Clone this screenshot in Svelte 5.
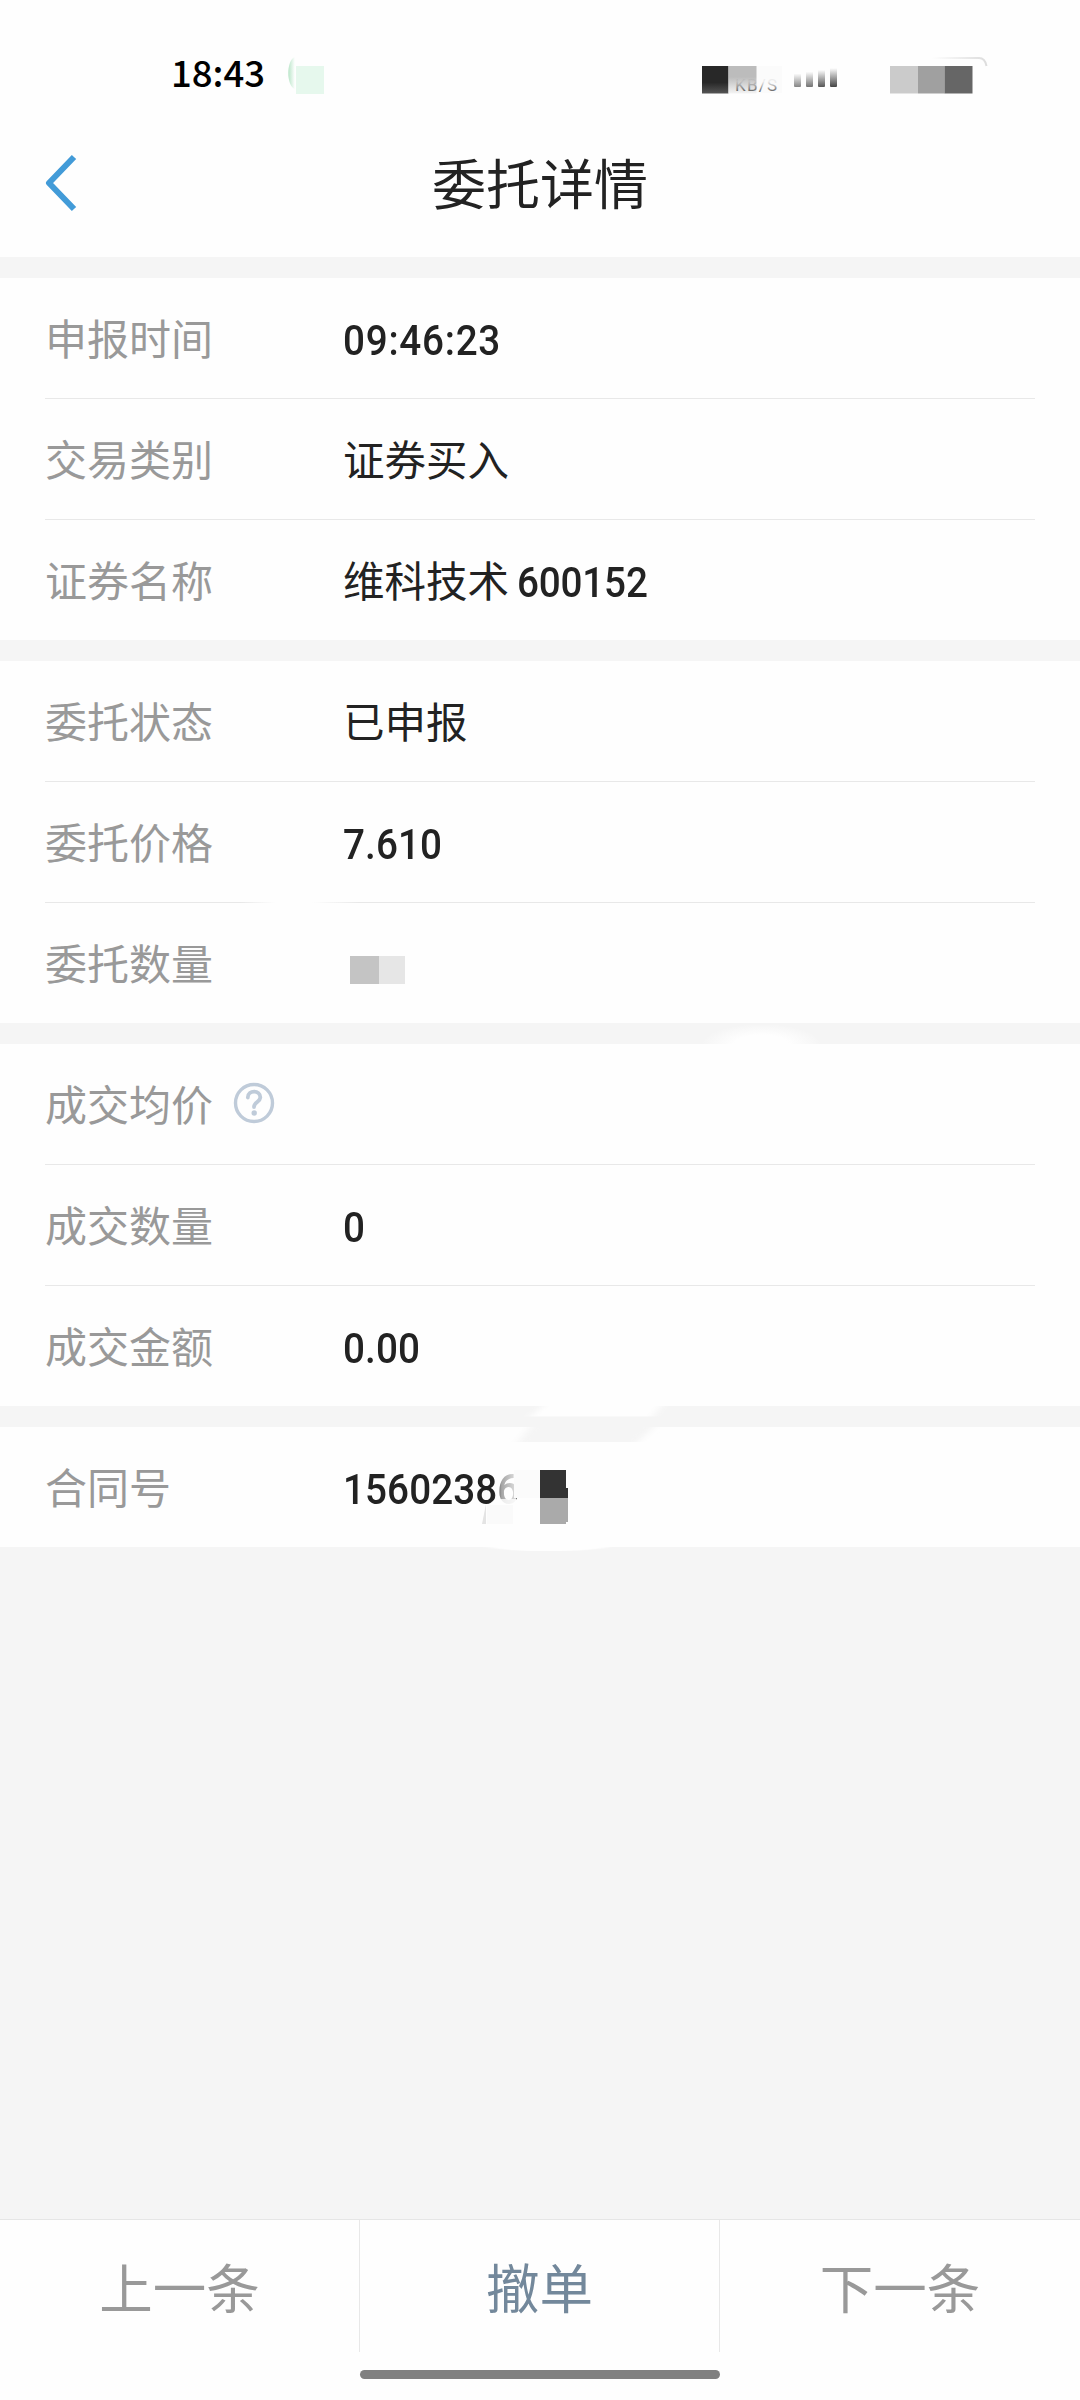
<script lang="ts">
  type Row = {
    label: string;
    text?: string;
    number?: string;
    time?: boolean;
    help?: boolean;
    masked?: 'amount' | 'contract';
  };

  const sections: Row[][] = [
    [
      { label: '申报时间', number: '09:46:23', time: true },
      { label: '交易类别', text: '证券买入' },
      { label: '证券名称', text: '维科技术', number: '600152' },
    ],
    [
      { label: '委托状态', text: '已申报' },
      { label: '委托价格', number: '7.610' },
      { label: '委托数量', masked: 'amount' },
    ],
    [
      { label: '成交均价', help: true },
      { label: '成交数量', number: '0' },
      { label: '成交金额', number: '0.00' },
    ],
    [{ label: '合同号', number: '15602386', masked: 'contract' }],
  ];
</script>

<div class="screen">
  <header>
    <div class="status-bar">
      <span class="clock">18:43</span>
      <svg class="status-left" width="44" height="44" viewBox="284 52 44 44">
        <defs>
          <linearGradient id="leaf" x1="0" x2="1">
            <stop offset="0" stop-color="#b9e5c8" />
            <stop offset="1" stop-color="#fff" />
          </linearGradient>
        </defs>
        <path d="M295 57C286 60 286 86 295 89Z" fill="url(#leaf)" />
        <rect x="296" y="66" width="28" height="28" fill="#e6f8ed" />
      </svg>
      <svg class="status-right" width="300" height="50" viewBox="694 52 300 50">
        <defs>
          <linearGradient id="bar" x1="0" y1="0" x2="0" y2="1">
            <stop offset="0.1" stop-color="#444" stop-opacity="0" />
            <stop offset="1" stop-color="#444" />
          </linearGradient>
          <linearGradient id="speed" x1="0" y1="0" x2="0" y2="1">
            <stop offset="0.35" stop-color="#666" stop-opacity="0.1" />
            <stop offset="0.9" stop-color="#555" />
          </linearGradient>
          <linearGradient id="dark" x1="0" y1="0" x2="0" y2="1">
            <stop offset="0.6" stop-color="#282828" />
            <stop offset="1" stop-color="#555" />
          </linearGradient>
          <linearGradient id="edge" x1="0" x2="1">
            <stop offset="0" stop-color="#ddd" stop-opacity="0" />
            <stop offset="1" stop-color="#ddd" />
          </linearGradient>
          <linearGradient id="fade" x1="0" y1="0" x2="0" y2="1">
            <stop offset="0.4" stop-color="#bcbcbc" />
            <stop offset="1" stop-color="#f4f4f4" />
          </linearGradient>
        </defs>
        <rect x="756" y="66" width="26" height="27" fill="#fbfbfb" />
        <rect x="702" y="66" width="26.5" height="27.5" fill="url(#dark)" />
        <rect x="728.5" y="66" width="28" height="27.5" fill="url(#fade)" />
        <text x="735" y="90.5" class="speed" fill="url(#speed)" textLength="42">KB/S</text>
        <rect x="794" y="72" width="7" height="15" rx="1" fill="url(#bar)" opacity="0.65" />
        <rect x="806" y="70" width="7" height="17" rx="1" fill="url(#bar)" opacity="0.75" />
        <rect x="818" y="68" width="7" height="19" rx="1" fill="url(#bar)" opacity="0.9" />
        <rect x="830" y="66" width="7" height="21" rx="1" fill="url(#bar)" />
        <path d="M932 58H979Q985 58 986.5 66" fill="none" stroke="url(#edge)" stroke-width="2" />
        <rect x="890" y="66" width="28" height="27.5" fill="#cbcbcb" />
        <rect x="918" y="66" width="26.5" height="27.5" fill="#a0a0a0" />
        <rect x="944.5" y="66" width="28" height="27.5" fill="#666" />
      </svg>
    </div>
    <div class="nav-bar">
      <button class="back" aria-label="返回">
        <svg width="36" height="60" viewBox="0 0 36 60">
          <path d="M30 4L5 30L30 56" fill="none" stroke="#429bd8" stroke-width="6" stroke-linejoin="round" />
        </svg>
      </button>
      <h1>委托详情</h1>
    </div>
  </header>

  <main>
    {#each sections as rows, s}
      <section>
        {#each rows as row}
          <div class="row">
            <span class="label">
              {row.label}
              {#if row.help}
                <svg class="help" width="42" height="42" viewBox="0 0 42 42" fill="none" stroke="#bfcbd9">
                  <circle cx="21" cy="21" r="18.5" stroke-width="3.4" />
                  <path d="M14.8 15.5C15 7.500 27.500 7.700 27.300 15.500C27 20 21 20 21 25" stroke-width="3.8" stroke-linecap="round" />
                  <circle cx="21.2" cy="31" r="2.700" fill="#bfcbd9" stroke="none" />
                </svg>
              {/if}
            </span>
            <span class="value">
              {#if row.text}<span>{row.text}</span>{/if}
              {#if row.number}
                <span class="number" class:time={row.time} class:after-text={row.text}>{row.number}</span>
              {/if}
              {#if row.masked === 'amount'}
                <i class="mask"></i>
              {/if}
            </span>
            {#if row.masked === 'contract'}
              <svg class="contract-mask" width="400" height="190" viewBox="0 0 400 190">
                <defs>
                  <filter id="soft" x="-10%" y="-50%" width="120%" height="200%">
                    <feGaussianBlur stdDeviation="5 0.5" />
                  </filter>
                  <linearGradient id="wipe" x1="0" x2="1">
                    <stop offset="0" stop-color="#fefefe" stop-opacity="0" />
                    <stop offset="0.35" stop-color="#fefefe" stop-opacity="0.6" />
                    <stop offset="1" stop-color="#fefefe" stop-opacity="0.85" />
                  </linearGradient>
                </defs>
                <path d="M213 26H331L323 36.5H200Z" fill="#fefefe" filter="url(#soft)" />
                <path d="M201 46H325L308 62H188Z" fill="#f5f5f5" filter="url(#soft)" />
                <path d="M153 165H285Q270 171 218 171Q165 171 153 165Z" fill="#fefefe" filter="url(#soft)" />
                <rect x="164" y="88" width="22" height="40" fill="url(#wipe)" />
                <path d="M165 119H186V145H158V125Z" fill="#fefefe" opacity="0.8" />
                <rect x="184" y="90" width="26" height="28" fill="#fbfbfb" />
                <rect x="157" y="125" width="26" height="19" fill="#fafafa" />
                <path d="M156 124V144H152Z" fill="#e4e4e4" />
                <path d="M210 90H236V108H238V118H210Z" fill="#333" />
                <path d="M210 118H238V142H236V144H210Z" fill="#aaa" />
              </svg>
            {/if}
          </div>
        {/each}
        {#if s === 1}
          <i class="smudge-line"></i>
        {/if}
        {#if s === 2}
          <i class="smudge-band"></i>
        {/if}
      </section>
    {/each}
  </main>

  <footer>
    <div class="actions">
      <button>上一条</button>
      <button class="primary">撤单</button>
      <button>下一条</button>
    </div>
    <div class="home-bar"></div>
  </footer>
</div>

<style>
  :global(body) {
    background: #f5f5f5;
  }

  .screen {
    display: flex;
    flex-direction: column;
    width: 1080px;
    height: 2400px;
    overflow: hidden;
    background: #f5f5f5;
    color: #222;
    font-family: Roboto, 'Noto Sans CJK SC', sans-serif;
  }

  header {
    height: 257px;
    background: #fefefe;
  }

  .status-bar {
    display: flex;
    align-items: flex-start;
    height: 110px;
    box-sizing: border-box;
    padding: 52px 86px 0 171px;
  }

  .clock {
    width: 113px;
    color: #000;
    font-family: 'Noto Sans CJK SC', sans-serif;
    font-size: 36.5px;
    font-weight: 500;
    line-height: 40px;
  }

  .status-right {
    margin-left: auto;
  }

  .speed {
    font-family: Roboto, sans-serif;
    font-size: 17px;
  }

  .nav-bar {
    display: grid;
    grid-template-columns: 120px 1fr 120px;
    align-items: center;
    height: 147px;
  }

  button {
    padding: 0;
    border: none;
    background: none;
    font-family: inherit;
  }

  .back {
    display: flex;
    padding: 0 0 2px 44px;
  }

  h1 {
    margin: 0;
    padding-top: 6px;
    color: #222;
    font-size: 54px;
    font-weight: 400;
    line-height: 80px;
    text-align: center;
  }

  main {
    flex: 1;
  }

  section {
    position: relative;
    margin-top: 21px;
    padding: 0 45px;
    background: #fefefe;
  }

  .row {
    position: relative;
    display: flex;
    align-items: center;
    height: 120px;
  }

  .row + .row {
    border-top: 1px solid #e8e8e8;
  }

  .label {
    display: flex;
    align-items: center;
    width: 298px;
    padding-top: 6px;
    color: #999;
    font-size: 42px;
    line-height: 60px;
  }

  .help {
    margin-left: 20px;
    margin-bottom: 8px;
  }

  .value {
    display: flex;
    align-items: center;
    padding-top: 6px;
    font-size: 41.5px;
    line-height: 60px;
  }

  .number {
    margin-top: -1px;
    font-size: 42px;
    font-weight: 500;
    letter-spacing: 0.1px;
    transform: scaleX(0.92);
    transform-origin: left;
  }

  .time {
    letter-spacing: 0.8px;
  }

  .after-text {
    margin-left: 8px;
    letter-spacing: -0.2px;
  }

  .mask {
    width: 55px;
    height: 28px;
    margin: 8px 0 0 7px;
    background: linear-gradient(90deg, #c4c4c4 52%, #e6e6e6 52%);
  }

  .contract-mask {
    position: absolute;
    left: 285px;
    top: -47px;
  }

  .smudge-line {
    position: absolute;
    top: 241px;
    left: 240px;
    width: 120px;
    height: 1px;
    background: linear-gradient(90deg, transparent, #fefefe 30%, #fefefe 60%, transparent);
  }

  .smudge-band {
    position: absolute;
    top: -19px;
    left: 690px;
    width: 130px;
    height: 19px;
    background: radial-gradient(ellipse 60px 20px at 55% 100%, #fefefe 45%, transparent);
  }

  footer {
    height: 180px;
    border-top: 1px solid #e6e6e6;
    background: #fefefe;
  }

  .actions {
    display: grid;
    grid-template-columns: repeat(3, 1fr);
    height: 132px;
  }

  .actions button {
    padding-top: 9px;
    color: #999;
    font-size: 53.5px;
    line-height: 80px;
  }

  .actions button:not(:last-child) {
    border-right: 1px solid #e8e8e8;
  }

  .actions .primary {
    color: #73889b;
  }

  .home-bar {
    width: 360px;
    height: 9px;
    margin: 18px auto 0;
    border-radius: 5px;
    background: #808080;
  }
</style>
